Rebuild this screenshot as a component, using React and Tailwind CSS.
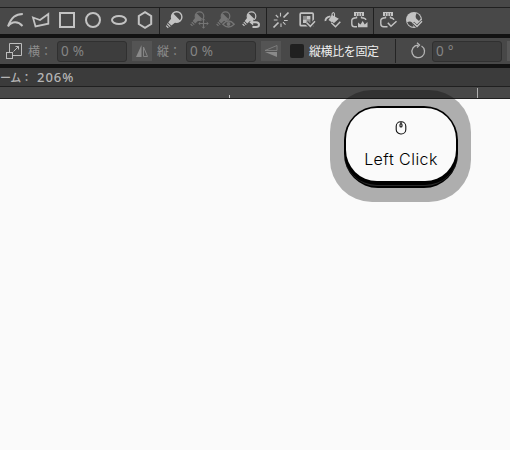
import React from 'react';

const Icon = ({ children, dim = false }) => (
  <svg
    viewBox="0 0 26 26"
    className={dim ? 'w-[26px] h-[26px] shrink-0 text-[#757575]' : 'w-[26px] h-[26px] shrink-0 text-[#c3c3c3]'}
    fill="none"
    stroke="currentColor"
    strokeWidth="2"
  >
    {children}
  </svg>
);

const Bulb = () => (
  <>
    <circle cx="15.7" cy="9" r="5.2" strokeWidth="1.4" />
    <path d="M12 5.3 L19.4 12.7 Q17.5 14.5 14.5 14.2 L10.4 17.6 L7.2 14.4 L10.5 10.3 Q10 7 12 5.3 Z" fill="currentColor" stroke="none" />
    <path d="M6.3 15.6 L9.3 18.6 M5.2 17.6 L7.3 19.7" strokeWidth="1.3" />
  </>
);

const SmallBulb = () => (
  <>
    <circle cx="12.5" cy="8.2" r="4.3" strokeWidth="1.2" />
    <path d="M9.6 5.3 L15.4 11.1 Q14 12.6 11.5 12.4 L8.3 15.5 L5.7 12.9 L8.4 9.5 Q8 7 9.6 5.3 Z" fill="currentColor" stroke="none" />
    <path d="M4.8 14.1 L7.3 16.6 M3.6 16 L5.5 17.9" strokeWidth="1.2" />
  </>
);

const Bottle = () => (
  <>
    <path d="M8 4 H18 V8 H8 Z" fill="currentColor" stroke="none" />
    <path d="M10.5 5 V8 M13 5 V8 M15.5 5 V8" stroke="#484848" strokeWidth="0.7" />
  </>
);

const Separator = () => <div className="w-px h-[26px] mx-px shrink-0 bg-[#202020]" />;

const Toolbar = () => (
  <div className="flex h-[26px] shrink-0 pl-[2px] bg-[#484848]">
    {/* Shape tools */}
    <Icon><path d="M20.8 6 C13.5 6 9.5 9.5 6 18.3 C10 13 16 13 20.5 18" /></Icon>
    <Icon><path d="M5 9.5 L12 12 L20.3 6 V15.7 L7.5 18.5 Z" strokeWidth="1.8" /></Icon>
    <Icon><rect x="6" y="5" width="14" height="14" /></Icon>
    <Icon><circle cx="13" cy="12" r="7" /></Icon>
    <Icon><ellipse cx="13" cy="12" rx="7" ry="4" /></Icon>
    <Icon><path d="M13 4.2 L19.2 8 V16 L13 19.8 L6.8 16 V8 Z" /></Icon>
    <Separator />

    {/* Light tools */}
    <Icon><Bulb /></Icon>
    <Icon dim>
      <SmallBulb />
      <path d="M16.5 11 V20 M12 15.5 H21" stroke="#484848" strokeWidth="3.5" />
      <path d="M16.5 11 V20 M12 15.5 H21" strokeWidth="1.2" />
      <path d="M14.8 12.3 L16.5 10.8 L18.2 12.3 M14.8 18.7 L16.5 20.2 L18.2 18.7 M13.3 13.8 L11.8 15.5 L13.3 17.2 M19.7 13.8 L21.2 15.5 L19.7 17.2" strokeWidth="0.8" />
    </Icon>
    <Icon dim>
      <SmallBulb />
      <path d="M9.8 16.2 Q15.5 9.8 21.2 16.2 Q15.5 21.8 9.8 16.2 Z" fill="#484848" strokeWidth="1.3" />
      <circle cx="15.5" cy="16" r="1.9" fill="currentColor" stroke="none" />
    </Icon>
    <Icon>
      <SmallBulb />
      <path d="M13 14.2 H17 Q20 14.2 20 16.7 Q20 19 17 19 H13.5" stroke="#484848" strokeWidth="4" />
      <path d="M13 14.2 H17 Q20 14.2 20 16.7 Q20 19 17 19 H13.5" />
      <path d="M10.3 14.2 L14.2 11 V17.5 Z" fill="currentColor" stroke="none" />
    </Icon>
    <Separator />

    {/* Fill and material tools */}
    <Icon>
      <path d="M20.5 4.5 L15.5 9.5 M10.5 14.5 L5.5 19.5" strokeWidth="1.7" />
      <path d="M7.8 7 L10.3 9.5 M12.5 4.8 V8.5 M5.8 12 H9.5 M15 14.2 L17.5 16.7 M13 15.5 V19 M16 12.5 H19.7" strokeWidth="1.1" />
    </Icon>
    <Icon>
      <rect x="6.2" y="5.2" width="13" height="12.5" rx="1" strokeWidth="1.7" />
      <path d="M9 8 H12.7 V11.5 H16.4 V15 H12.7 V11.5 H9 Z" fill="#8c8c8c" stroke="none" />
      <path d="M12.7 8 H16.4 V11.5 H12.7 Z M9 11.5 H12.7 V15 H9 Z" fill="currentColor" stroke="none" />
      <path d="M12.5 14.5 L16.3 18.5 L21.5 12.8" stroke="#484848" strokeWidth="4" />
      <path d="M12.5 14.5 L16.3 18.3 L21 13.2" strokeWidth="1.5" />
    </Icon>
    <Icon>
      <path d="M12 7 L18.8 10.8 L13.5 15.5 L8.5 12 Z" fill="currentColor" stroke="none" />
      <path d="M12 10 V6 Q13.5 3 14.5 6 V10" strokeWidth="1.1" />
      <path d="M10.5 8.3 Q5 9.5 5.5 13" strokeWidth="1.8" />
      <path d="M11.3 14.8 L15.5 18.7 L20.3 13.7" stroke="#484848" strokeWidth="3" />
      <path d="M11.3 14.8 L15.5 18.7 L20.3 13.7" strokeWidth="1.5" />
    </Icon>
    <Icon>
      <Bottle />
      <path d="M10.5 8.5 V9.7 Q5.8 10 5.8 12.5 V16 Q5.8 18.8 8.5 18.8 H11 M15.5 8.5 V9.7 Q19.8 10 19.8 12" strokeWidth="1.4" />
      <path d="M12 19.3 V14.5 L14.5 16.5 L16.7 13 L18.7 16.5 L21.5 14 V19.3 Z" fill="currentColor" stroke="none" />
    </Icon>
    <Separator />
    <Icon>
      <Bottle />
      <path d="M10.5 8.5 V9.7 Q5.8 10 5.8 12.5 V15.7 Q5.8 18.8 8.8 18.8 H12.5 M15.5 8.5 V9.7 Q18.5 10 18.8 12" strokeWidth="1.4" />
      <path d="M12.8 14.8 L16 18.3 L21.5 13.2" strokeWidth="1.5" />
    </Icon>
    <Icon>
      <circle cx="13" cy="12" r="8" fill="currentColor" stroke="none" />
      <path d="M15.5 5.3 Q18.8 6.5 19.8 10.5 L18 13 L16 11.2 Q13.5 9.5 15.5 5.3 Z" fill="#484848" stroke="none" />
      <path d="M6.2 14.2 Q9 12.8 11 14.5 L12.5 18.8 Q8 18.5 6.2 14.2 Z" fill="#484848" stroke="none" />
      <path d="M12 14.8 L16 18.6 L21.5 13" stroke="#484848" strokeWidth="3.2" />
      <path d="M12.3 14.8 L16 18.4 L21 13.2" strokeWidth="1.5" />
    </Icon>
  </div>
);

const Field = ({ children }) => (
  <div className="w-[70px] h-[21px] shrink-0 rounded-[3px] border border-[#303030] bg-[#3d3d3d] pl-[3px] text-[13.5px] leading-[18px] tracking-[0.3px] text-[#858585]">
    {children}
  </div>
);

const OptionsBar = () => (
  <div className="flex h-[26px] shrink-0 items-center bg-[#484848] text-[#8d8d8d]">
    <svg viewBox="0 0 18 18" className="ml-[5px] w-[18px] h-[18px] shrink-0" fill="none" stroke="#bdbdbd" strokeWidth="1">
      <path d="M4.5 10 V1.5 H16.5 V13.5 H8" />
      <rect x="1.5" y="10.5" width="6" height="6" />
      <path d="M8.5 9.5 L13.5 4.5 M10.5 4.5 H13.5 V7.5" />
    </svg>
    <span className="ml-[5px] w-[29px] shrink-0 pt-[2px] text-[12px] leading-none whitespace-nowrap">横：</span>
    <Field>0 %</Field>
    <div className="ml-[5px] flex w-5 h-5 shrink-0 items-center justify-center bg-[#545454]">
      <svg viewBox="0 0 14 14" className="w-3.5 h-3.5">
        <path d="M6.5 1 V13 H1 Z" fill="#8a8a8a" />
        <path d="M8.5 3 V12.5 H12.5 Z" fill="none" stroke="#858585" />
      </svg>
    </div>
    <span className="ml-[5px] w-[29px] shrink-0 pt-[2px] text-[12px] leading-none whitespace-nowrap">縦：</span>
    <Field>0 %</Field>
    <div className="ml-[5px] flex w-5 h-5 shrink-0 items-center justify-center bg-[#545454]">
      <svg viewBox="0 0 14 14" className="w-3.5 h-3.5">
        <path d="M13 1.5 V6.5 H1 Z" fill="none" stroke="#858585" strokeWidth="0.8" />
        <path d="M13 13 V8 H1 Z" fill="#8a8a8a" />
      </svg>
    </div>
    <div className="ml-[9px] w-[14px] h-[14px] shrink-0 rounded-[2px] bg-[#202020]" />
    <span className="ml-[5px] w-[71px] shrink-0 pt-[2px] text-[12px] leading-none tracking-[-0.4px] whitespace-nowrap text-[#eeeeee]">縦横比を固定</span>
    <div className="ml-[15px] w-px h-6 shrink-0 bg-[#242424]" />
    <svg viewBox="0 0 16 18" className="ml-[14px] w-4 h-[18px] shrink-0" fill="none" stroke="#b5b5b5" strokeWidth="1.3">
      <path d="M11.5 4 A6.3 6.3 0 1 1 8 3.1 M7 0.7 L9.5 3.1 L7 5.5" />
    </svg>
    <div className="ml-[6px]"><Field>0 °</Field></div>
    <div className="ml-[5px] w-[3px] h-5 shrink-0 bg-[#575757]" />
  </div>
);

const Ruler = () => (
  <div className="flex h-[12px] shrink-0 items-end border-b border-[#202020] bg-[#484848]">
    <div className="ml-[229px] w-px h-[3px] bg-[#c0c0c0]" />
    <div className="ml-[247px] w-px h-[10px] bg-[#b0b0b0]" />
  </div>
);

const KeyOverlay = () => (
  <div className="absolute left-[330px] top-[90px] w-[141px] h-[112px] rounded-[42px] bg-black/30 pl-[14px] pt-4">
    <div className="w-[114px] h-[82px] rounded-[34px] bg-black">
      <div className="h-[80px] rounded-[33px] border-b border-[#2c2c2c] px-[2px] pt-[2px]">
        <div className="flex h-[73px] flex-col items-center rounded-[31px] bg-[#fafafa] text-black">
          <svg viewBox="0 0 12 14" className="mt-[13px] w-3 h-3.5" fill="none" stroke="#111111" strokeWidth="1.1">
            <rect x="1.2" y="0.8" width="9.6" height="12.2" rx="4.5" />
            <path d="M6 1 V3" />
            <rect x="5" y="2.8" width="2" height="3.2" rx="1" />
          </svg>
          <span className="mt-[15px] font-['Inter'] text-[16px] font-light leading-[18px] tracking-[0.45px] whitespace-nowrap">Left Click</span>
        </div>
      </div>
    </div>
  </div>
);

const App = () => {
  return (
    <div className="relative flex h-[450px] w-[510px] flex-col overflow-hidden bg-[#fafafa] font-['Noto_Sans','Noto_Sans_CJK_JP',sans-serif]">
      <div className="h-2 shrink-0 border-b border-[#202020] bg-[#484848]" />
      <Toolbar />
      <div className="h-1 shrink-0 bg-[#121212]" />
      <OptionsBar />
      <div className="h-1 shrink-0 bg-[#121212]" />
      {/* Zoom status */}
      <div className="flex h-[19px] shrink-0 items-center border-b border-[#202020] bg-[#3b3b3b] leading-none font-medium text-[#b5b5b5]">
        <span className="w-[37px] shrink-0 text-[11px] tracking-[-0.3px] whitespace-nowrap">ーム：</span>
        <span className="text-[13px] tracking-[1px]">206%</span>
      </div>
      <Ruler />
      <div className="flex-1 bg-[#fafafa]" />
      <KeyOverlay />
    </div>
  );
};

export default App;
